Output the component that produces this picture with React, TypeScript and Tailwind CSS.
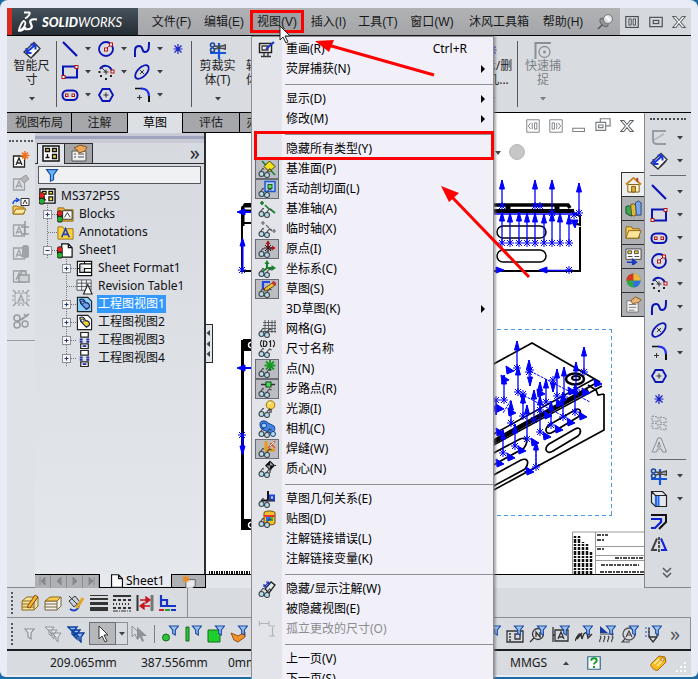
import type { ReactNode } from "react";
import clsx from "clsx";

const BLUE = "#0a14b4";

function Icon({ children, size = 18, className }: { children?: ReactNode; size?: number; className?: string }) {
  return (
    <svg
      width={size}
      height={size}
      viewBox="0 0 18 18"
      fill="none"
      className={clsx("block shrink-0", className)}
      aria-hidden="true"
    >
      {children}
    </svg>
  );
}

function Caret({ className }: { className?: string }) {
  return (
    <svg width="6" height="4" viewBox="0 0 6 4" className={clsx("block shrink-0 text-[#3c4044]", className)}>
      <path d="M0 0h6L3 3.5z" fill="currentColor" />
    </svg>
  );
}

/* ---------- sketch icons, shared by the ribbon and the right toolbar ---------- */

const sketch: Record<string, ReactNode> = {
  dimension: (
    <>
      <path d="M1 11l10-9.500 6 6L8 17z" fill="#f4f7fb" stroke="#333" strokeWidth="1.300" />
      <path d="M10 15l6-6" stroke="#333" strokeWidth="1.500" />
      <path d="M4 11l8-7M3.500 12V7M3.500 12h5M12.500 3.500v5M12.500 3.500h-5" stroke="#1638d8" strokeWidth="2" />
    </>
  ),
  line: <path d="M2 2l14 14" stroke={BLUE} strokeWidth="2.200" />,
  rect: (
    <>
      <rect x="2" y="3.500" width="14" height="11" stroke={BLUE} strokeWidth="2" />
      <rect x="1" y="12.500" width="3" height="3" fill="#fff" stroke="#b01010" />
      <rect x="14" y="2.500" width="3" height="3" fill="#fff" stroke="#b01010" />
    </>
  ),
  slot: (
    <>
      <rect x="1.500" y="4.500" width="15" height="9.500" rx="4.500" stroke={BLUE} strokeWidth="2" />
      <rect x="4.500" y="8" width="2.500" height="2.500" fill="#fff" stroke="#b01010" />
      <rect x="11" y="8" width="2.500" height="2.500" fill="#fff" stroke="#b01010" />
    </>
  ),
  circle: (
    <>
      <circle cx="9" cy="9" r="7" stroke={BLUE} strokeWidth="1.800" />
      <path d="M9 9l5-5" stroke="#b01010" />
      <rect x="7.500" y="8" width="3" height="3" fill="#fff" stroke="#b01010" />
      <rect x="12.500" y="3" width="3" height="3" fill="#fff" stroke="#b01010" />
    </>
  ),
  arc: (
    <>
      <path d="M3 6c3-5 10-4 12 2" stroke={BLUE} strokeWidth="2" />
      <path d="M4 4l5 5M9 6.500v5M6.500 9h5" stroke="#333" />
      <rect x="14" y="7" width="3" height="3" fill="#fff" stroke="#b01010" />
      <path d="M1.500 9h2M3 13h2M8 16h2M13 13h2" stroke="#222" strokeWidth="2" />
    </>
  ),
  spline: <path d="M2 17c0-6-1-11 4-11s2 6 6 6 4-4 4-10" stroke={BLUE} strokeWidth="2" />,
  ellipse: (
    <>
      <ellipse cx="9" cy="9" rx="8.500" ry="4.500" transform="rotate(-45 9 9)" stroke={BLUE} strokeWidth="1.800" />
      <path d="M7 7l4 4M11 7l-4 4" stroke="#333" />
    </>
  ),
  fillet: (
    <>
      <path d="M2 2.500h7" stroke="#111" strokeWidth="1.500" />
      <path d="M8 2.500c5 0 8 3 8 8" stroke="#1c2df0" strokeWidth="2" />
      <path d="M16 10v6" stroke="#111" strokeWidth="2" />
      <path d="M6.500 9v5M4 11.500h5" stroke="#333" />
    </>
  ),
  polygon: (
    <>
      <path d="M5.500 3h7l3.500 6-3.500 6h-7L2 9z" stroke={BLUE} strokeWidth="1.800" />
      <path d="M9 6.500v5M6.500 9h5" stroke="#333" />
    </>
  ),
  point: <path d="M9 4v10M4.500 9h9M5.500 5.500l7 7M12.500 5.500l-7 7" stroke="#1a22c8" strokeWidth="1.200" />,
  trim: (
    <>
      <path d="M1 12h16M10 2v16" stroke="#1556d8" strokeWidth="2.200" />
      <circle cx="3.500" cy="4" r="2" stroke="#1c46a0" strokeWidth="1.600" />
      <circle cx="3.500" cy="9" r="2" stroke="#1c46a0" strokeWidth="1.600" />
      <path d="M5.500 8l11-4.500v3.500zM5.500 5l11 3.500V5z" fill="#777" stroke="#444" />
    </>
  ),
  convert: (
    <>
      <path d="M1.500 1.500h11l4 4v11h-11l-4-4zM1.500 1.500l4 4v11M5.500 5.500h11" fill="#e4e8ec" stroke="#222" strokeWidth="1.200" />
      <path d="M6 6v10M8.500 6v10" stroke="#1c66f0" strokeWidth="2" />
    </>
  ),
  offset: (
    <>
      <path d="M1 2h15v7l-7 7" stroke="#111" strokeWidth="2" />
      <path d="M1 6h10v3l-6 6H1" stroke="#0c22cc" strokeWidth="2.200" />
    </>
  ),
  mirror: (
    <>
      <path d="M7 2.500L2 14h5" stroke="#444" strokeWidth="2" />
      <path d="M11 2.500L16 14h-5" stroke="#1022dd" strokeWidth="2" />
      <path d="M9 1v16" stroke="#222" strokeWidth="1.500" strokeDasharray="3 1" />
    </>
  ),
  pattern: (
    <path
      d="M2 3l6 1v5L2 8zM10 4l6 1v5l-6-1zM2 10l6 1v5l-6-1zM10 11l6 1v5l-6-1z"
      stroke="#8d9095"
      strokeDasharray="2 1"
    />
  ),
  text: <path d="M1.500 16h5l1-3h4l1 3h4L11 2H8L2.500 15M7.500 11h3L9 6z" stroke="#8b8e92" />,
  grayArc: (
    <>
      <path d="M16 2H3v9c0 3 2 4 4 4h9" stroke="#989b9f" strokeWidth="2" />
      <path d="M4 11l10-6" stroke="#b4b6b9" strokeWidth="1.500" />
    </>
  ),
  snap: (
    <>
      <path d="M1.500 18V2H17" stroke="#8c8f93" strokeWidth="2" />
      <circle cx="10.500" cy="11" r="5.500" stroke="#8c8f93" strokeWidth="1.300" />
      <path d="M9 11h3M10.500 9.500v3" stroke="#8c8f93" strokeWidth="1.500" />
    </>
  ),
};

/* ---------- menu bar ---------- */

const menus = [
  { name: "文件(F)", width: "w-[53px]" },
  { name: "编辑(E)", width: "w-[52px]" },
  { name: "视图(V)", width: "w-[54px]", open: true },
  { name: "插入(I)", width: "w-[49px]" },
  { name: "工具(T)", width: "w-[50px]" },
  { name: "窗口(W)", width: "w-[58px]" },
  { name: "沐风工具箱", width: "w-[76px]" },
  { name: "帮助(H)", width: "w-[52px]" },
];

function Logo() {
  return (
    <div className="flex h-full w-[131px] shrink-0 items-center gap-1 border-l-5 border-[#d92a20] bg-gradient-to-b from-[#47525c] to-[#252d34] pl-[5px]">
      <svg width="21" height="22" viewBox="0 0 21 22" fill="none" aria-hidden="true">
        <path d="M7 1.500h5c2 0 0 4-4 6M1 20c7-2 9-9 6-10-2 0-5 8-5 9 0 2 5 0 7-3" stroke="#fff" strokeWidth="1.800" />
        <path d="M20 8.500c-6-1-8 1-6 4.500s0 6-6 5" stroke="#fff" strokeWidth="2.200" />
      </svg>
      <span className="whitespace-nowrap font-['Lato','Noto_Sans',sans-serif] text-[13px] italic leading-5 text-white">
        <b className="font-black">SOLID</b>WORKS
      </span>
    </div>
  );
}

function MenuBar() {
  return (
    <header className="flex h-7 shrink-0 border-b border-black bg-gradient-to-b from-[#b1b2b4] to-[#a5a6a9]">
      <Logo />
      <nav className="flex pl-[7px] font-['Liberation_Sans','Noto_Sans_CJK_SC',sans-serif] text-xs">
        {menus.map((menu) => (
          <div key={menu.name} className={clsx("relative shrink-0", menu.width)}>
            <button
              className={clsx(
                "mt-[2px] h-[23px] w-full whitespace-nowrap leading-4 text-[#18191b]",
                menu.open && "border-3 border-[#ff0000] bg-[#a0a1a4]",
              )}
            >
              {menu.name}
            </button>
            {menu.open && <ViewMenu />}
          </div>
        ))}
      </nav>
      <button className="ml-2 w-6" aria-label="固定">
        <Icon>
          <path d="M1 16l5-5" stroke="#555" strokeWidth="1.500" />
          <ellipse cx="7" cy="9.500" rx="3" ry="5" transform="rotate(-45 7 9.500)" fill="#8f9398" stroke="#666" />
          <circle cx="11" cy="6" r="4.500" fill="#dfe2e6" stroke="#777" />
          <path d="M9 3.500l4 4" stroke="#fff" strokeWidth="2" />
        </Icon>
      </button>
      <div className="ml-auto flex w-[73px] items-center justify-around bg-[#d5d8dd] text-[#4b4f54]">
        <button aria-label="平铺">
          <Icon size={14}>
            <rect x="1" y="2" width="16" height="14" stroke="currentColor" strokeWidth="1.500" />
            <path d="M5 5h3v8H5zM10.500 5h3v8h-3z" stroke="currentColor" strokeWidth="1.200" />
          </Icon>
        </button>
        <button aria-label="最大化">
          <Icon size={14}>
            <rect x="1" y="3" width="16" height="12" stroke="currentColor" strokeWidth="1.500" />
            <rect x="5.500" y="7" width="7" height="4" stroke="currentColor" strokeWidth="1.500" />
          </Icon>
        </button>
        <CloseButton />
      </div>
    </header>
  );
}

function CloseButton() {
  return (
    <button aria-label="关闭">
      <Icon size={14}>
        <path
          d="M1 2h4l4 5 4-5h4l-6 7 6 7h-4l-4-5-4 5H1l6-7z"
          fill="#fff"
          stroke="#5c6066"
          strokeWidth="1.300"
        />
      </Icon>
    </button>
  );
}

/* ---------- view menu ---------- */

const Glasses = () => (
  <g stroke="#3f4449" strokeWidth="1.100">
    <path d="M2 12l3-3.500 1 .5M8 13l3.500-4 2 1" />
    <circle cx="3.500" cy="14" r="2.500" fill="#b4dbe8" />
    <circle cx="9" cy="15" r="2.500" fill="#b4dbe8" />
  </g>
);

const marks: Record<string, ReactNode> = {
  plane: (
    <>
      <path d="M4 1l13 14" stroke="#157f2c" strokeWidth="1.500" />
      <path d="M6 6.500l5.500-5.500 5.500 5.500-5.500 5.500z" fill="#f6e419" stroke="#3c3a12" />
    </>
  ),
  section: (
    <>
      <rect x="7" y="1.500" width="10" height="10" fill="#b4cdf2" stroke="#1d59d6" strokeWidth="1.500" />
      <rect x="10" y="4.500" width="4" height="4" fill="#6ecf5a" stroke="#15641e" />
    </>
  ),
  axis: <path d="M4 1v4M2 3h4M7 5l4 4M12 9l5 4" stroke="#13802b" strokeWidth="1.700" />,
  tempAxis: <path d="M5 1v4M3 3h4M8 5l3 3M12 9l2 2M16 9v4M14 11h4" stroke="#66696d" strokeWidth="1.200" />,
  origin: (
    <>
      <path d="M10 8V1M10 8h7" stroke="#b3131a" strokeWidth="1.600" />
      <path d="M7.500 4L10 .5 12.500 4zM14 5.500L17.500 8 14 10.500z" fill="#b3131a" />
      <path d="M6 8h8M10 4v8M7 5l6 6M13 5l-6 6" stroke="#3a1010" />
    </>
  ),
  coord: (
    <>
      <path d="M9 8V2M9 8h7M9 8l-5 4" stroke="#16832c" strokeWidth="2" />
      <path d="M6.500 4L9 0l2.500 4zM13.500 5L18 8l-4.500 3z" fill="#16832c" />
    </>
  ),
  sketch: (
    <>
      <path d="M12 2H5v7h4" stroke="#2246dd" strokeWidth="2.200" />
      <path d="M7 8l8-5.500 3 2L10 10l-4 1z" fill="#f3c335" stroke="#6d4a11" />
      <path d="M14.500 2l3 2.500" stroke="#c33131" strokeWidth="3" />
    </>
  ),
  grid: <path d="M5 2.500h13M5 5.500h13M5 8.500h13M5 11.500h13M7 0v13M10.500 0v13M14 0v13M17 0v13" stroke="#5d6065" />,
  dimName: (
    <path
      d="M4 0C2 2 2 5 4 7M5.500 1v5.500h1.500C9.500 6 9.500 1 7 1zM11 2l1.500-1v6M15 0c2 2 2 5 0 7"
      stroke="#222"
      strokeWidth="1.200"
    />
  ),
  point: <path d="M12 0v11M6.500 5.500h11M8 1.500l8 8M16 1.500l-8 8" stroke="#189a22" strokeWidth="1.900" />,
  route: (
    <>
      <path d="M3 4.500h14" stroke="#2b2e31" strokeWidth="1.500" />
      <rect x="8" y="2" width="5" height="5" fill="#4edc5c" stroke="#0b4914" />
    </>
  ),
  light: (
    <>
      <circle cx="12.500" cy="5" r="4.300" fill="#fbd64c" stroke="#9a7112" />
      <path d="M11 3.500l2-1" stroke="#fff" strokeWidth="1.500" />
      <path d="M11 10h3M11 12h3" stroke="#54575b" strokeWidth="1.500" />
    </>
  ),
  camera: (
    <>
      <path d="M2 4c0-4 6-4 8-1l6 3c2 3 0 7-3 7l-8-3c-2-1-3-3-3-6z" fill="#3e86e8" stroke="#123f93" />
      <circle cx="6" cy="5.500" r="2.500" fill="#9ccbf9" stroke="#123f93" />
      <circle cx="15" cy="14" r="2.500" fill="#b6dcf3" stroke="#1b3f74" />
    </>
  ),
  weld: (
    <>
      <path d="M8 1v9h9" stroke="#e89b14" strokeWidth="3" />
      <path d="M10 8l7-7M12 3l5 5" stroke="#e2541a" strokeWidth="1.600" />
      <path d="M12 6l4-4" stroke="#fff" />
    </>
  ),
  mass: (
    <>
      <path d="M7 5.500L12 .5l5 5-5 5z" fill="#111" />
      <path d="M12 5.500V2l3.500 3.500zM12 5.500V9L8.500 5.500z" fill="#9ba4ad" />
      <path d="M12 10v3M17 5.500h1" stroke="#111" />
    </>
  ),
  relation: (
    <>
      <path d="M10 1v9M3 10.500h14" stroke="#14161a" strokeWidth="2" />
      <rect x="12" y="5.500" width="4" height="4" stroke="#1e45e0" strokeWidth="2" />
    </>
  ),
  decal: (
    <>
      <path d="M6 2.500c2-2 9-2 11 0v11c-2 2-9 2-11 0z" fill="#f5c02e" stroke="#6b4b0c" />
      <path d="M6 6h11" stroke="#e8362a" strokeWidth="2" />
      <rect x="8" y="7" width="4" height="4" fill="#2b6ff0" />
      <rect x="12" y="7" width="3" height="4" fill="#35b64a" />
    </>
  ),
  annot: (
    <>
      <path d="M7 9l6-7 4 3-6 8z" fill="#e6e8ec" stroke="#222" strokeWidth="1.300" />
      <path d="M6 7l5-5M6 7V4M6 7h3M11 2v3M11 2H8" stroke="#1a34c8" strokeWidth="1.200" />
    </>
  ),
};

type Row = { label: string; mark?: string; on?: boolean; sub?: boolean; keys?: string; off?: boolean; kind?: string };

const viewRows: (Row | null)[] = [
  { label: "重画(R)", kind: "redraw", keys: "Ctrl+R" },
  { label: "荧屏捕获(N)", sub: true },
  null,
  { label: "显示(D)", sub: true },
  { label: "修改(M)", sub: true },
  null,
  { label: "隐藏所有类型(Y)" },
  { label: "基准面(P)", mark: "plane", on: true },
  { label: "活动剖切面(L)", mark: "section", on: true },
  { label: "基准轴(A)", mark: "axis" },
  { label: "临时轴(X)", mark: "tempAxis" },
  { label: "原点(I)", mark: "origin", on: true },
  { label: "坐标系(C)", mark: "coord" },
  { label: "草图(S)", mark: "sketch", on: true },
  { label: "3D草图(K)", sub: true },
  { label: "网格(G)", mark: "grid" },
  { label: "尺寸名称", mark: "dimName" },
  { label: "点(N)", mark: "point", on: true },
  { label: "步路点(R)", mark: "route", on: true },
  { label: "光源(I)", mark: "light" },
  { label: "相机(C)", mark: "camera" },
  { label: "焊缝(W)", mark: "weld", on: true },
  { label: "质心(N)", mark: "mass" },
  null,
  { label: "草图几何关系(E)", mark: "relation" },
  { label: "贴图(D)", mark: "decal" },
  { label: "注解链接错误(L)" },
  { label: "注解链接变量(K)" },
  null,
  { label: "隐藏/显示注解(W)", mark: "annot" },
  { label: "被隐藏视图(E)" },
  { label: "孤立更改的尺寸(O)", kind: "isolate", off: true },
  null,
  { label: "上一页(V)" },
  { label: "下一页(S)" },
];

function MenuIcon({ row }: { row: Row }) {
  if (row.kind === "redraw") {
    return (
      <Icon>
        <rect x="1.500" y="3.500" width="12" height="9" fill="#fff" stroke="#222" strokeWidth="1.500" />
        <path d="M4 6h6v4H4zM6 13v3M10 13v3M3 16.500h10" stroke="#333" strokeWidth="1.300" />
        <path d="M8 9l8-7" stroke="#1c35cc" strokeWidth="2" />
      </Icon>
    );
  }
  if (row.kind === "isolate") {
    return (
      <Icon>
        <path d="M1.500 1v5M11 1v5M2 3.500h9M11 6h6M11 16h6M14.500 7v9" stroke="#b1b3b8" strokeWidth="1.200" />
      </Icon>
    );
  }
  if (!row.mark) return null;
  return (
    <Icon>
      {marks[row.mark]}
      <Glasses />
    </Icon>
  );
}

function ViewMenu() {
  return (
    <ul className="absolute left-px top-7 z-20 w-[243px] border border-[#8c8e94] bg-gradient-to-r from-[#e3e4e9] from-[30px] to-[#f1f0f8] to-[30px] pt-[2px] font-['Noto_Sans','Noto_Sans_CJK_SC',sans-serif] text-xs shadow-[2px_0_2px_#77777799]">
      {viewRows.map((row, i) =>
        row === null ? (
          <li key={i} className="h-[10px] pl-[33px] pt-[5px]">
            <div className="border-t border-[#8f9196]" />
          </li>
        ) : (
          <li key={i}>
            <button
              disabled={row.off}
              className={clsx(
                "flex h-5 w-full items-center pl-[3px] leading-5",
                row.off ? "text-[#8c8c90]" : "text-black",
              )}
            >
              <span
                className={clsx(
                  "flex h-5 w-6 items-center justify-center",
                  row.on && "border border-[#696c72] bg-[#bbbdc2]",
                )}
              >
                <MenuIcon row={row} />
              </span>
              <span className="whitespace-nowrap pl-[7px]">{row.label}</span>
              {row.keys && <span className="ml-auto pr-[26px]">{row.keys}</span>}
              {row.sub && (
                <svg width="4" height="8" viewBox="0 0 4 8" className="ml-auto mr-2">
                  <path d="M0 0l4 4-4 4z" />
                </svg>
              )}
            </button>
          </li>
        ),
      )}
    </ul>
  );
}

/* ---------- ribbon ---------- */

function BigTool({ icon, lines, className, off }: { icon: string; lines: string[]; className?: string; off?: boolean }) {
  return (
    <button
      className={clsx(
        "flex h-full shrink-0 flex-col items-center pt-[5px] leading-[14px]",
        off ? "text-[#7e8185]" : "text-[#1f2124]",
        className,
      )}
    >
      <Icon>{sketch[icon]}</Icon>
      {lines.map((line) => (
        <span key={line} className="whitespace-nowrap">
          {line}
        </span>
      ))}
      <Caret className={clsx("mt-[10px]", off && "opacity-60")} />
    </button>
  );
}

const toolGrid = [
  ["line", "circle", "spline", "point"],
  ["rect", "arc", "ellipse"],
  ["slot", "polygon", "fillet"],
];

const Divider = () => <div className="h-[66px] w-px shrink-0 self-center bg-[#55585c]" />;

function Ribbon() {
  return (
    <section className="flex h-[76px] shrink-0 overflow-hidden bg-[#d8dbe0] text-xs">
      <BigTool icon="dimension" lines={["智能尺", "寸"]} className="w-[49px]" />
      <Divider />
      <div className="flex w-[134px] shrink-0 flex-col pl-1 pt-px">
        {toolGrid.map((tools, r) => (
          <div key={r} className="flex h-[23px] items-center">
            {tools.map((tool) => (
              <button key={tool} className="flex w-9 shrink-0 items-center gap-[6px]" aria-label={tool}>
                <Icon>{sketch[tool]}</Icon>
                {tool !== "point" && tool !== "polygon" && <Caret />}
              </button>
            ))}
          </div>
        ))}
      </div>
      <Divider />
      <BigTool icon="trim" lines={["剪裁实", "体(T)"]} className="w-[51px]" />
      <BigTool icon="convert" lines={["转换实", "体引用"]} className="w-[42px]" />
      <div className="flex w-[186px] shrink-0 items-start justify-around pt-[6px]">
        <button aria-label="等距实体">
          <Icon>{sketch.offset}</Icon>
        </button>
        <button aria-label="镜向实体">
          <Icon>{sketch.mirror}</Icon>
        </button>
      </div>
      <BigTool icon="point" lines={["显示/删", "除几..."]} className="w-[46px] pr-1" />
      <Divider />
      <BigTool icon="snap" lines={["快速捕", "捉"]} className="w-[50px]" off />
    </section>
  );
}

/* ---------- tabs and document window buttons ---------- */

const tabs = [
  { name: "视图布局", width: "w-[65px]" },
  { name: "注解", width: "w-14" },
  { name: "草图", width: "w-[55px]", active: true },
  { name: "评估", width: "w-[57px]" },
  { name: "办公室产品", width: "w-[74px]" },
];

function TabStrip() {
  return (
    <div className="flex h-5 shrink-0 bg-white text-xs">
      {tabs.map((tab) => (
        <button
          key={tab.name}
          className={clsx(
            "shrink-0 border-r border-black leading-4",
            tab.width,
            tab.active ? "bg-[#dcdfe4] text-black" : "border-b bg-[#a5a7ab] text-[#1d1e20]",
          )}
        >
          {tab.name}
        </button>
      ))}
      <div className="ml-auto flex w-[118px] items-end justify-between pr-[10px] text-[#7b7e83]">
        <button aria-label="左窗格">
          <Icon size={14}>
            <path d="M1 1h16v16H1zM6 5L3 9l3 4M8 5v8M11 5h3v8h-3z" stroke="currentColor" strokeWidth="1.200" />
          </Icon>
        </button>
        <button aria-label="右窗格">
          <Icon size={14}>
            <path d="M1 1h16v16H1zM12 5l3 4-3 4M10 5v8M4 5h3v8H4z" stroke="currentColor" strokeWidth="1.200" />
          </Icon>
        </button>
        <button aria-label="最小化">
          <Icon size={14}>
            <path d="M1 12h15v4H1z" stroke="currentColor" strokeWidth="1.300" />
          </Icon>
        </button>
        <button aria-label="还原">
          <Icon size={16}>
            <path d="M6 6V2h11v8h-5M1 6h11v9H1zM4 9h5v3H4z" stroke="currentColor" strokeWidth="1.300" />
          </Icon>
        </button>
        <CloseButton />
      </div>
    </div>
  );
}

/* ---------- left annotation toolbar ---------- */

const Note = ({ color = "#222" }: { color?: string }) => (
  <path d="M1.500 5h11v11h-11zM4 14l3-7 3 7M5 12h4" stroke={color} strokeWidth="1.300" fill="none" />
);

const leftTools: ReactNode[] = [
  <>
    <rect x="1" y="5" width="12" height="11" fill="#fff" />
    <Note />
    <path d="M13 0v9M8.500 4.500h9M10 1.500l6 6M16 1.500l-6 6" stroke="#f0701c" strokeWidth="1.500" />
  </>,
  <>
    <Note color="#a0a3a7" />
    <path d="M8 5l6-4 3 4-5 4z" fill="#b4b6ba" stroke="#999" />
  </>,
  <>
    <path d="M9 1.500h8v7H9z" fill="#fff" stroke="#333" />
    <path d="M11 7l2-4 2 4" stroke="#333" />
    <path d="M1 7c0-3 2-4 5-4M4 1l3 2-3 2" stroke="#1c4ed8" strokeWidth="1.500" />
    <path d="M1 9h4l1 1h6v7H1z" fill="#f7cb55" stroke="#9a6f12" />
    <path d="M1 17l3-5h10l-3 5z" fill="#fde59a" stroke="#9a6f12" />
  </>,
  <>
    <Note color="#a0a3a7" />
    <path d="M13 1v13M9 7h8M9 14h8" stroke="#989ba0" strokeWidth="1.500" />
  </>,
  <>
    <Note color="#a0a3a7" />
    <rect x="10" y="2" width="7" height="13" rx="2.500" fill="#a0a3a7" />
  </>,
  <>
    <Note color="#a0a3a7" />
    <path d="M7 9h10v7H7zM9 9V5h5v4" stroke="#989ba0" strokeWidth="1.500" fill="#cfd1d5" />
  </>,
  <>
    <path d="M3 4h12v10H3z" stroke="#a0a3a7" />
    <path
      d="M6 13l3-7 3 7M7 11h4M1 1l3 3M17 1l-3 3M1 17l3-3M17 17l-3-3M7 1v2M11 1v2M7 15v2M11 15v2M0 7h2M0 11h2M16 7h2M16 11h2"
      stroke="#989ba0"
      strokeWidth="1.200"
    />
  </>,
  <>
    <circle cx="5" cy="6" r="3" stroke="#989ba0" strokeWidth="1.500" />
    <circle cx="5" cy="13" r="3" stroke="#989ba0" strokeWidth="1.500" />
    <circle cx="13" cy="12" r="3" stroke="#989ba0" strokeWidth="1.500" />
    <path d="M7 9l10-7M5 10l7-4M12 2l3 3" stroke="#989ba0" strokeWidth="1.700" />
  </>,
];

function LeftToolbar() {
  return (
    <aside className="flex w-7 shrink-0 flex-col border-b border-[#85888d] bg-[#dfe2e7]">
      <div className="flex flex-col items-center border-b border-[#9b9ea3] pb-2">
        <div className="mb-[6px] mt-[7px] w-6 border-t-2 border-dotted border-[#55585d]" />
        {leftTools.map((art, i) => (
          <button key={i} className="flex h-[23px] items-center" aria-label={`注解 ${i + 1}`}>
            <Icon>{art}</Icon>
          </button>
        ))}
      </div>
    </aside>
  );
}

/* ---------- feature tree ---------- */

const TrafficLight = () => (
  <>
    <rect x="0" y="4.500" width="6" height="13" rx="3" fill="#222" />
    <circle cx="3" cy="8" r="2.600" fill="#e0201a" />
    <circle cx="3" cy="14" r="2.600" fill="#22b02c" />
  </>
);

const DrawingGlyph = () => (
  <>
    <path d="M1 1h16v15H1z" fill="#fff" stroke="#111" strokeWidth="1.500" />
    <path
      d="M3.500 3.500h4v3h-4zM10.500 3.500h4v3h-4zM3.500 12.500h4M5.500 9v3M10.500 9.500h4v4h-4z"
      fill="#f4d83c"
      stroke="#111"
      strokeWidth="1.300"
    />
  </>
);

const PartView = ({ part, sheet }: { part: string; sheet: string }) => (
  <>
    <path d="M1.500 1.500h11l4 4v11h-15z" fill={sheet} stroke="#222" strokeWidth="1.200" />
    <path d="M4 4c3-2 5 0 6 3 3 0 5 2 4 5l-3 2-6-6z" fill={part} stroke="#102060" strokeWidth="1.200" />
    <circle cx="7" cy="7" r="1.500" fill={sheet} stroke="#102060" />
  </>
);

const StandardView = () => (
  <>
    <path d="M5 .5h8v5H5zM5 12.500h8v5H5z" fill="#fff" stroke="#222" strokeWidth="1.300" />
    <path d="M4 8h3M11 8h3M4 10.500h3M11 10.500h3M7 15h4" stroke="#1f2c9c" strokeWidth="2" />
  </>
);

const treeIcons: Record<string, ReactNode> = {
  drawing: (
    <>
      <DrawingGlyph />
      <TrafficLight />
    </>
  ),
  blocks: (
    <>
      <path d="M1 2h6l1 2h9v12H1z" fill="#f4b63a" stroke="#8d6310" />
      <path d="M6 5h10v9H6zM8 12l3-5 3 5" fill="#fff" stroke="#333" />
      <TrafficLight />
    </>
  ),
  annotations: (
    <>
      <path d="M1 3h5l1 2h10v11H1z" fill="#fbd23c" stroke="#9b7415" />
      <path d="M5 14l4-9 4 9M6.500 11h5" stroke="#1b3fc0" strokeWidth="1.700" />
    </>
  ),
  sheet: (
    <>
      <path d="M5 2h7l4 4v10H5zM12 2v4h4" fill="#fff" stroke="#111" strokeWidth="1.300" />
      <TrafficLight />
    </>
  ),
  format: (
    <path
      d="M1.500 1.500h15v15h-15zM4 4h12M4 4v9h12M9 13V9h7M1.500 9H4M9 1.500V4"
      fill="#fff"
      stroke="#111"
      strokeWidth="1.300"
    />
  ),
  revision: (
    <>
      <path d="M1 2h15v11H1zM1 5.500h15M1 9h15M6 2v11M11 2v11" fill="#f4f6f8" stroke="#55585d" />
      <path d="M8 17l4.500-10L17 17z" fill="#fff" stroke="#222" strokeWidth="1.200" />
    </>
  ),
  partBlue: <PartView part="#6fa4ec" sheet="#8cd0ff" />,
  partYellow: <PartView part="#f2d12c" sheet="#fff" />,
  standard: <StandardView />,
};

const tree = [
  { label: "MS372P5S", icon: "drawing", level: 0 },
  { label: "Blocks", icon: "blocks", level: 1, box: "+" },
  { label: "Annotations", icon: "annotations", level: 1 },
  { label: "Sheet1", icon: "sheet", level: 1, box: "-" },
  { label: "Sheet Format1", icon: "format", level: 2, box: "+" },
  { label: "Revision Table1", icon: "revision", level: 2 },
  { label: "工程图视图1", icon: "partBlue", level: 2, box: "+", selected: true },
  { label: "工程图视图2", icon: "partYellow", level: 2, box: "+" },
  { label: "工程图视图3", icon: "standard", level: 2, box: "+" },
  { label: "工程图视图4", icon: "standard", level: 2, box: "+" },
];

const indents = ["pl-1", "pl-2", "pl-[27px]"];

function Expander({ box }: { box?: string }) {
  return (
    <svg width="14" height="18" viewBox="0 0 14 18" fill="none" className="shrink-0">
      <path d="M4.500 0v18M5 9.500h9" stroke="#777" strokeDasharray="1 1" />
      {box && <rect x=".5" y="5.500" width="8" height="8" fill="#f4f6f8" stroke="#8d9096" />}
      {box && <path d="M2.500 9.500h4" stroke="#2a3570" />}
      {box === "+" && <path d="M4.500 7.500v4" stroke="#2a3570" />}
    </svg>
  );
}

function FeaturePanel() {
  return (
    <section className="flex w-[171px] shrink-0 flex-col border-r-2 border-[#2b2d31] bg-gradient-to-b from-[#d6d9df] to-[#e4e7eb]">
      <div className="h-[10px] shrink-0 border-b-4 border-t-3 border-[#c8cbd5] bg-[#a0a4bc]" />
      <div className="flex h-[21px] shrink-0 border-b border-[#2b2d31]">
        <button
          className="-mb-px ml-[2px] flex w-7 justify-center border border-b-0 border-[#2b2d31] bg-[#e2e5ea] pt-px"
          aria-label="特征树"
        >
          <Icon>
            <DrawingGlyph />
          </Icon>
        </button>
        <button className="flex w-7 justify-center border-r border-t border-[#2b2d31] bg-[#a3a5a9]" aria-label="属性">
          <Icon>
            <path d="M2 7h14v10H2zM4 10h2M8 10h6M4 13h2M8 13h6" fill="#eee" stroke="#555" />
            <path d="M4 4l6-3 7 2-2 4-6 2-2-3z" fill="#e9a75c" stroke="#8c541a" />
          </Icon>
        </button>
        <button className="ml-auto pr-1 text-xl leading-4 text-[#26282c]">»</button>
      </div>
      <label className="mx-[3px] mt-[2px] flex h-[18px] shrink-0 items-center border border-[#55585d] bg-[#f0f1f3]">
        <Icon size={14} className="ml-1.5">
          <path d="M2 2h14l-5 7v6l-4 2V9z" fill="#6db2f4" stroke="#1b4ea0" strokeWidth="1.500" />
        </Icon>
        <input className="h-4 w-full min-w-0 bg-transparent text-xs outline-none" aria-label="过滤器" />
      </label>
      <ul className="pt-[3px] text-xs leading-[18px] text-[#101114]">
        {tree.map((node) => (
          <li key={node.label} className={clsx("flex h-[18px] items-center", indents[node.level])}>
            {node.level > 0 && <Expander box={node.box} />}
            <Icon size={17}>{treeIcons[node.icon]}</Icon>
            <span className={clsx("ml-1 whitespace-nowrap px-px", node.selected && "bg-[#3399ff] text-white")}>
              {node.label}
            </span>
          </li>
        ))}
      </ul>
    </section>
  );
}

/* ---------- drawing area ---------- */

// vertical dimension arrows: x, y of the star, y of the tip
const flatArrows = [
  [502, 206, 180],
  [535, 206, 180],
  [552, 213, 180],
  [579, 213, 183],
  [502, 243, 212],
  [510, 243, 213],
  [519, 243, 212],
  [527, 243, 213],
  [535, 243, 213],
  [544, 243, 214],
  [552, 243, 212],
  [560, 243, 213],
  [569, 243, 215],
];

const isoArrows = [
  [517, 368, 341],
  [518, 392, 366],
  [529, 372, 360],
  [530, 370, 386],
  [584, 372, 347],
  [557, 396, 369],
  [564, 397, 367],
  [576, 390, 362],
  [504, 400, 375],
  [523, 394, 404],
  [511, 423, 401],
  [523, 416, 394],
  [534, 420, 390],
  [540, 410, 382],
  [546, 402, 379],
  [553, 380, 392],
  [527, 439, 405],
  [540, 432, 396],
  [551, 425, 401],
  [563, 417, 392],
  [575, 412, 385],
  [503, 453, 430],
  [515, 446, 424],
  [536, 467, 441],
  [496, 400, 415],
];

const isoHeads = [
  [510, 370],
  [505, 379],
  [541, 393],
  [572, 391],
  [586, 392],
  [598, 383],
  [583, 416],
  [571, 422],
  [559, 429],
  [547, 436],
  [522, 450],
  [511, 457],
  [500, 463],
  [530, 471],
  [535, 442],
  [500, 432],
  [548, 415],
  [512, 412],
  [560, 403],
  [500, 408],
];

function Star({ x, y }: { x: number; y: number }) {
  return <path d={`M${x - 4} ${y}h8M${x} ${y - 4}v8M${x - 3} ${y - 3}l6 6M${x + 3} ${y - 3}l-6 6`} />;
}

function Arrow({ x, y, tip }: { x: number; y: number; tip: number }) {
  const back = tip < y ? 9 : -9;
  return (
    <g stroke="#0000ff">
      <path d={`M${x} ${y}V${tip}`} strokeWidth="1.300" />
      <path d={`M${x - 2.5} ${tip + back}h5L${x} ${tip}z`} fill="#0000ff" />
      <Star x={x} y={y} />
    </g>
  );
}

function Drawing() {
  return (
    <svg className="absolute inset-0 h-full w-full" fill="none" aria-hidden="true">
      <g transform="translate(-206 -133)">
        <g stroke="#000" strokeWidth="2">
          <path d="M253 204h-8l-3 4v63h11M242 223h11" />
          <path d="M243 206h10M243 211h10M243 206v20" strokeWidth="3" />
          <path d="M242.500 340v190" strokeWidth="3" />
          <path d="M253 340h-9v10h9zM253 520h-9v9h9z" fill="#000" strokeWidth="2" />
          <path d="M253 342c-6 0-6 6 0 6M253 522c-6 0-6 6 0 6" stroke="#fff" strokeWidth="1.500" />
        </g>
        <g stroke="#0000ff" strokeWidth="2">
          <path d="M242.500 270v-30M238 212h15M238 368h15M242.500 435v15" />
          <path
            d="M237 212l8-3v6zM237 368l8-3v6zM240 246l2.500-8 2.500 8zM240 446l2.500 9 2.500-9z"
            fill="#0000ff"
            strokeWidth="1"
          />
          <g strokeWidth="1">
            <Star x={242} y={270} />
            <Star x={242} y={435} />
          </g>
        </g>
        <circle cx="517" cy="152" r="7.500" fill="#c6c6c6" stroke="#b8b8b8" />
        <path d="M495 151h6l-3 4z" fill="#444" />

        <g stroke="#000">
          <path d="M490 205h78l2 3" strokeWidth="3.500" />
          <path d="M490 211h84" strokeWidth="4" />
          <path d="M508 206v4M557 206v4" strokeWidth="5" />
          <path d="M574 213l6 3v9l-5-2M580 227v44h-90" strokeWidth="2" />
          <rect x="497" y="226" width="49" height="12" rx="6" strokeWidth="1.500" />
          <rect x="497" y="250" width="49" height="12" rx="6" strokeWidth="1.500" />
        </g>
        <g stroke="#0000ff">
          <path d="M490 214h86M540 270.500h30" strokeWidth="1.500" />
          <path d="M539 270l8-3v6zM496 267l8 3-8 3zM571 220h7l-3 8z" fill="#0000ff" />
          <Star x={569} y={270} />
          <Star x={574} y={215} />
          <Star x={540} y={206} />
        </g>
        {flatArrows.map(([x, y, tip]) => (
          <Arrow key={`${x}-${y}`} x={x} y={y} tip={tip} />
        ))}

        <path d="M490 329.500h122M490 515.500h122" stroke="#4b9be8" strokeDasharray="4 3" />
        <path d="M611.500 329v187" stroke="#4b9be8" strokeDasharray="4 3" />

        <g stroke="#000" strokeWidth="1.700">
          <path d="M490 366l42-23 68 39M604 394v36L490 492" />
          <path d="M490 442l108-60" strokeWidth="2" />
          <path d="M490 436l104-57M490 447l112-61" strokeWidth="1.500" />
          <path d="M490 444l98-54" strokeWidth="4" />
          <path d="M588 385l8 5 2 5 6-1" />
          <ellipse cx="575" cy="379" rx="9" ry="5.500" strokeWidth="2.500" />
          <ellipse cx="576" cy="378" rx="4" ry="2" strokeWidth="2" />
          <path d="M549 425l26-15c6-3 7 3 3 7l-25 15c-6 4-10-2-4-7z" />
          <path d="M549 444l26-15c6-3 7 3 3 7l-25 15c-6 4-10-2-4-7z" />
          <path d="M490 455l30-16c8-3 8 4 4 9l-34 19M490 477l31-17c8-3 8 4 4 9l-35 19" />
        </g>
        <g stroke="#0000ff">
          <path d="M530 371l60 31M517 392l50 26M511 400l-8 13M536 442v26l-12 4" strokeDasharray="3 1" />
          {isoHeads.map(([x, y]) => (
            <path key={`${x}-${y}`} d={`M${x - 4} ${y - 4}l8 5-7 3z`} fill="#0000ff" />
          ))}
        </g>
        {isoArrows.map(([x, y, tip]) => (
          <Arrow key={`${x}-${y}`} x={x} y={y} tip={tip} />
        ))}

        <g stroke="#999">
          <path d="M572.500 574v-42H645M595.500 532v42M596 546.500h49M596 555.500h49M596 560.500h49" />
        </g>
        <path
          d="M575 574v-38M579 574v-38M583 574v-32M587 574v-30M591 574v-22"
          stroke="#111"
          strokeWidth="2.500"
          strokeDasharray="3 1 2 1 4 1"
        />
        <path
          d="M597 535h11M597 540h7M597 549h7M615 558h30M601 565h38M600 572h45"
          stroke="#111"
          strokeWidth="1.500"
          strokeDasharray="4 1 2 1"
        />
        <path d="M209 572.500h46" stroke="#111" strokeWidth="3" strokeDasharray="1 1 2 1" />
      </g>
    </svg>
  );
}

const taskTabs: ReactNode[] = [
  <>
    <path d="M3 9h12v8H3z" fill="#fff4c8" stroke="#7b5a14" />
    <path d="M1 9l8-7 8 7" stroke="#c8861a" strokeWidth="2" />
    <path d="M7 17v-6h4v6z" fill="#e0a83a" stroke="#7b5a14" />
    <path d="M13 2v4" stroke="#b3342a" strokeWidth="2" />
  </>,
  <>
    <path d="M1 7l3-1 3 2v9l-3-1-3-2z" fill="#39a852" stroke="#174f23" />
    <path d="M6 5l3-1 3 2v10l-3 1-2-1z" fill="#e0b83c" stroke="#6b5212" />
    <path d="M11 3l3-2 3 2v13h-5z" fill="#7aa7e8" stroke="#27477f" />
  </>,
  <>
    <path d="M1 3h6l1 2h7v10H1z" fill="#f7cb55" stroke="#8a6312" />
    <path d="M1 15l3-8h13l-3 8z" fill="#fde59a" stroke="#8a6312" />
  </>,
  <>
    <path d="M1 1h16v11H1z" fill="#fff" stroke="#444" />
    <path d="M3 3h4v3H3zM10 3h4v3h-4zM3 9h5M10 9h5" fill="#f1d33a" stroke="#444" />
    <path d="M2 15h8M8 12l4 3-4 3z" stroke="#1b39c0" strokeWidth="1.500" fill="#1b39c0" />
  </>,
  <>
    <circle cx="9" cy="9" r="7.500" fill="#2ca84a" />
    <path d="M9 9V1.500A7.500 7.500 0 0 0 1.500 9z" fill="#d8342a" />
    <path d="M9 9h7.500A7.500 7.500 0 0 1 9 16.500z" fill="#2f6fe0" />
    <path d="M9 9h7.500A7.500 7.500 0 0 0 9 1.500z" fill="#f0b63c" />
  </>,
  <>
    <path d="M2 5h12v12H2zM4 9h8M4 12h8M4 15h6" fill="#f3f3f3" stroke="#777" />
    <path d="M6 5l5-4 6 3-3 3-6 1z" fill="#e9b47a" stroke="#8c541a" />
  </>,
];

function Canvas() {
  return (
    <main className="relative flex min-w-0 flex-1 items-start overflow-hidden bg-white">
      <Drawing />
      <button
        className="absolute -left-0.5 top-[191px] flex h-[39px] w-[9px] flex-col items-center justify-evenly border border-l-0 border-[#2b2d31] bg-[#e2e5ea]"
        aria-label="折叠"
      >
        <Caret className="rotate-90" />
        <Caret className="rotate-90" />
        <Caret className="rotate-90" />
      </button>
      <div className="relative ml-auto mt-[39px] flex flex-col border-l border-t border-[#333]">
        {taskTabs.map((art, i) => (
          <button
            key={i}
            className={clsx(
              "flex h-6 w-[22px] items-center justify-center border-b border-[#333]",
              i === 0 ? "bg-[#eceef0]" : "bg-[#aeb0b4]",
            )}
            aria-label={`任务窗格 ${i + 1}`}
          >
            <Icon size={17}>{art}</Icon>
          </button>
        ))}
      </div>
    </main>
  );
}

function SheetTabs() {
  return (
    <footer className="flex h-[14px] shrink-0 border-t border-black bg-[#e2e5e9] text-xs leading-3">
      {["M6 1L2 5l4 4zM1 1v8", "M6 1L2 5l4 4z", "M2 1l4 4-4 4z", "M2 1l4 4-4 4zM7 1v8"].map((d) => (
        <button
          key={d}
          className="flex w-4 justify-center border-r border-[#8c8f94] bg-[#aeb0b4] pt-px"
          aria-label="翻页"
        >
          <svg width="8" height="10" viewBox="0 0 8 10">
            <path d={d} fill="#85888d" stroke="#85888d" />
          </svg>
        </button>
      ))}
      <button className="-mt-px flex w-[73px] items-center gap-[2px] border-b border-x border-black bg-[#e6e9ed] pl-[10px]">
        <Icon size={14}>
          <path d="M2 1h9l5 5v11H2zM11 1v5h5" fill="#fff" stroke="#111" strokeWidth="1.500" />
        </Icon>
        Sheet1
      </button>
      <button className="flex w-[34px] justify-center border-b border-r border-black bg-[#aeb0b4]" aria-label="添加图纸">
        <Icon size={14}>
          <path d="M5 6h12v8l-4 3H5z" fill="#e8eaee" stroke="#445" />
          <path d="M5 0v10M0 5h10M1.500 1.500l7 7M8.500 1.500l-7 7" stroke="#f08a1c" strokeWidth="1.500" />
        </Icon>
      </button>
    </footer>
  );
}

/* ---------- right sketch toolbar ---------- */

const rightTools: { icon: string; caret?: boolean }[][] = [
  [
    { icon: "grayArc", caret: true },
    { icon: "dimension", caret: true },
  ],
  [
    { icon: "line", caret: true },
    { icon: "rect", caret: true },
    { icon: "slot", caret: true },
    { icon: "circle", caret: true },
    { icon: "arc", caret: true },
    { icon: "spline", caret: true },
    { icon: "ellipse", caret: true },
    { icon: "fillet", caret: true },
    { icon: "polygon" },
    { icon: "point" },
    { icon: "pattern" },
    { icon: "text" },
  ],
  [{ icon: "trim", caret: true }, { icon: "convert", caret: true }, { icon: "offset" }, { icon: "mirror" }],
];

function RightToolbar() {
  return (
    <aside className="flex w-[47px] shrink-0 flex-col border-b border-l border-[#85888d] bg-[#d8dbe0] px-[5px]">
      <div className="mb-[6px] mt-[5px] border-t-2 border-dotted border-[#45484d]" />
      {rightTools.map((group, g) => (
        <div key={g} className={clsx(g > 0 && "mt-[3px] border-t border-[#66696e] pt-1")}>
          {group.map((tool) => (
            <button key={tool.icon} className="flex h-[23px] w-full items-center gap-[9px]" aria-label={tool.icon}>
              <Icon>{sketch[tool.icon]}</Icon>
              {tool.caret && <Caret />}
            </button>
          ))}
        </div>
      ))}
      <svg width="10" height="12" viewBox="0 0 10 12" fill="none" className="mb-2 ml-3 mt-auto">
        <path d="M1 1l4 4 4-4M1 6l4 4 4-4" stroke="#55585d" strokeWidth="1.500" />
      </svg>
    </aside>
  );
}

/* ---------- bottom toolbars ---------- */

const Handle = () => <div className="ml-[4px] h-[22px] shrink-0 border-l-2 border-dotted border-[#55585d]" />;

const layerTools: ReactNode[] = [
  <>
    <path d="M1 7l5-4h11l-4 4zM1 7v9h12V7M13 16l4-4V3M1 10h12M1 13h12" fill="#f6e39a" stroke="#8a6b20" />
    <path d="M6 13L14 1l3 2-8 11z" fill="#f3b52c" stroke="#8a4b12" />
  </>,
  <>
    <path d="M1 7v9h12V7zM13 16l4-4V3l-4 4M1 10h12M1 13h12" fill="#f2f2ee" stroke="#77643a" />
    <path d="M1 7l5-4h11l-4 4z" fill="#f8c94a" stroke="#8a6b20" />
  </>,
  <>
    <path d="M2 7l6-5 5 6-6 5z" fill="#c8d0dc" stroke="#333" />
    <path d="M3 15c4 3 8 1 9-3" stroke="#1d3fc0" strokeWidth="2" />
    <path d="M10 14l6-10" stroke="#e2a51f" strokeWidth="3" />
    <path d="M2 2l8 8" stroke="#333" />
  </>,
  <>
    <path d="M0 1.500h18" stroke="#333" />
    <path d="M0 5h18" stroke="#333" strokeWidth="2" />
    <path d="M0 9.500h18" stroke="#333" strokeWidth="3" />
    <path d="M0 15h18" stroke="#333" strokeWidth="4" />
  </>,
  <>
    <path d="M0 2h18" stroke="#333" strokeWidth="2" />
    <path d="M0 6h18M0 14h18" stroke="#333" strokeWidth="2" strokeDasharray="3 2" />
    <path d="M0 10h18" stroke="#333" strokeWidth="2" strokeDasharray="1 2" />
    <path d="M0 17h18" stroke="#333" strokeDasharray="5 1 1 1" />
  </>,
  <>
    <path d="M1.500 1v16" stroke="#333" strokeWidth="2" />
    <path d="M16 1v16" stroke="#777" strokeWidth="3" />
    <path d="M4 6h8M10 3l4 3-4 3zM6 12h8M8 9l-4 3 4 3z" fill="#c8141c" stroke="#c8141c" strokeWidth="1.300" />
  </>,
  <>
    <path d="M2 1v11h15M2 6h6v6" stroke="#1733c4" strokeWidth="2.200" />
    <path d="M0 16h5" stroke="#d0202a" strokeWidth="2" />
    <path d="M6 16h5" stroke="#22a030" strokeWidth="2" />
    <path d="M12 16h5" stroke="#1733c4" strokeWidth="2" />
  </>,
];

function LayerToolbar() {
  return (
    <div className="flex h-[30px] shrink-0 items-center border-b border-[#8b8e93] bg-[#d8dbe0]">
      <Handle />
      <div className="ml-2 flex h-full items-center gap-[5px] border-r border-[#8b8e93] pr-[10px]">
        {layerTools.map((art, i) => (
          <button key={i} aria-label={`图层 ${i + 1}`}>
            <Icon>{art}</Icon>
          </button>
        ))}
      </div>
    </div>
  );
}

const Funnel = () => (
  <path d="M8.500 1h9l-3.200 4v5l-2.600-1.500V5z" fill="#9cc8f6" stroke="#1c4aa4" strokeWidth="1.200" />
);

const filterArt: ReactNode[] = [
  <circle cx="5" cy="12.500" r="3.500" fill="#2fc53a" stroke="#136c1b" />,
  <path d="M2 2h3v14H2z" fill="#2fc53a" stroke="#136c1b" />,
  <path d="M1 5h12v12H1z" fill="#1fd02c" stroke="#136c1b" />,
  <path d="M1 8l7 3 7-4v5l-7 5-4-2z" fill="#f0922a" stroke="#9b4f10" />,
  <path d="M2 4l12 12" stroke="#222" />,
  <path d="M1 8h10v8H1z" stroke="#222" />,
  <path d="M1 16L12 4" stroke="#222" />,
  <circle cx="7" cy="11" r="4" stroke="#222" />,
  <path d="M2 5v11h12" stroke="#222" />,
  <path d="M1 9h12v6H1z" stroke="#222" />,
  <circle cx="7" cy="11" r="4" stroke="#222" />,
  <path d="M2 15L8 5l6 10z" stroke="#222" />,
  <path d="M2 5v11h12" stroke="#222" />,
  <path d="M1 9h12v6H1z" stroke="#222" />,
  <path d="M2 15L8 5" stroke="#222" />,
  <path d="M1 6h16v11H1zM3 9h2M3 12h2M3 15h2M9 9h5v5H9z" stroke="#333" strokeWidth="1.300" />,
  <>
    <circle cx="9" cy="9" r="5.500" stroke="#333" strokeWidth="1.300" />
    <path d="M7 12V7l4 5V7M5 13l-4 4" stroke="#333" strokeWidth="1.300" />
  </>,
  <path d="M1 2v15M3 5h13v11H3zM6 14l3-7 3 7M7 12h4M1 10h2" stroke="#333" strokeWidth="1.300" />,
  <path d="M0 16c4-9 6-9 7-2 2-8 5-8 6-1l4-4M2 14l5-6" stroke="#333" strokeWidth="1.500" />,
  <>
    <path d="M2 1l8 7H2z" fill="#1c3aa0" />
    <path
      d="M2 9h14M2 11c3 2-2 4 0 6M6 11c3 2-2 4 0 6M10 11c3 2-2 4 0 6M14 11c3 2-2 4 0 6"
      stroke="#444"
      strokeWidth="1.200"
    />
  </>,
  <>
    <circle cx="8" cy="9" r="6" stroke="#555" strokeWidth="1.300" />
    <path d="M5 12l3-6 3 6M6 10h4M4 14l-3 3h8" stroke="#444" strokeWidth="1.200" />
  </>,
  <>
    <path d="M1 3h5M1 7h5M1 11h5" stroke="#1d4fd0" strokeDasharray="2 1" />
    <path d="M5 3v9l4 5 4-5V8M5 12h8" stroke="#333" strokeWidth="1.300" />
  </>,
];

function SelectionToolbar() {
  return (
    <div className="flex h-[31px] shrink-0 items-center overflow-hidden border-r border-[#8b8e93] bg-[#d8dbe0]">
      <Handle />
      <div className="ml-2 flex items-center gap-[5px]">
        <button aria-label="过滤器">
          <Icon>
            <path d="M4 4h9l-3 4v6l-3-2V8z" fill="#e4e6ea" stroke="#8f9297" strokeWidth="1.200" />
          </Icon>
        </button>
        <button aria-label="清除过滤器">
          <Icon>
            <path
              d="M1 2h9L7 6v5L5 9V6zM4 5h9l-3 4v5l-2-2V9zM8 8h9l-3 4v5l-2-2v-3z"
              fill="#e4e6ea"
              stroke="#8f9297"
            />
          </Icon>
        </button>
        <button aria-label="所有过滤器">
          <Icon>
            <path
              d="M1 2h9L7 6v5L5 9V6zM4 5h9l-3 4v5l-2-2V9zM8 8h9l-3 4v5l-2-2v-3z"
              fill="#8fc3fa"
              stroke="#0f3f9c"
              strokeWidth="1.400"
            />
          </Icon>
        </button>
      </div>
      <button
        className="ml-1 flex h-[23px] w-[27px] items-center justify-center border border-[#6c6f74] bg-[#b6b8bc]"
        aria-label="选择"
      >
        <Icon>
          <path d="M5 1v13l3-3 3 6 2-1-3-6h4z" fill="#fff" stroke="#333" />
        </Icon>
      </button>
      <button
        className="flex h-[23px] w-3 items-center justify-center border border-l-0 border-[#8b8e93]"
        aria-label="选择选项"
      >
        <Caret />
      </button>
      <button className="ml-[2px]" aria-label="放大选择">
        <Icon>
          <path d="M2 1v11l3-3 2 5 2-1-2-4h3z" fill="#d8dbe0" stroke="#909397" />
          <path d="M7 2v13l3-3 2 5 2-1-2-5h5z" fill="#8f9296" />
        </Icon>
      </button>
      <div className="mx-[6px] h-[18px] w-px shrink-0 bg-[#7b7e83]" />
      <div className="flex items-center gap-[5px]">
        {filterArt.map((art, i) => (
          <button key={i} aria-label={`选择过滤 ${i + 1}`}>
            <Icon>
              {art}
              <Funnel />
            </Icon>
          </button>
        ))}
      </div>
      <button className="ml-2 text-xl leading-5 text-[#55585d]">»</button>
    </div>
  );
}

function StatusBar() {
  return (
    <div className="flex h-[26px] shrink-0 items-center border-t-2 border-[#1b1c1e] bg-[#d8dbe0] text-xs text-[#17181a]">
      <span className="ml-[43px] w-[91px]">209.065mm</span>
      <span className="w-[87px]">387.556mm</span>
      <span>0mm</span>
      <div className="ml-auto flex w-[181px] items-center">
        <button className="flex w-[77px] items-center gap-4">
          MMGS
          <Caret className="rotate-180" />
        </button>
        <button aria-label="帮助">
          <Icon size={14}>
            <path d="M1 1h16v16H1z" fill="#fff" stroke="#2a6a80" strokeWidth="1.500" />
            <path d="M5.500 6c0-4 7-4 7 0 0 2-3.500 2-3.500 5M9 13v2.500" stroke="#119a2a" strokeWidth="2.500" />
          </Icon>
        </button>
        <button className="ml-12" aria-label="标签">
          <Icon>
            <path d="M2 10l8-8 6 1 1 5-8 8c-2 2-9-4-7-6z" fill="#f8b91e" stroke="#a86a08" />
            <path d="M5 10l5-5M8 12l5-5" stroke="#fff0b0" strokeWidth="1.500" />
            <circle cx="13.500" cy="5.500" r="1.500" fill="#fff" stroke="#a86a08" />
          </Icon>
        </button>
        <svg width="12" height="12" viewBox="0 0 12 12" className="ml-auto mr-1 mt-2">
          <path d="M9 1h2v2H9zM5 5h2v2H5zM9 5h2v2H9zM1 9h2v2H1zM5 9h2v2H5zM9 9h2v2H9z" fill="#f8f9fa" />
        </svg>
      </div>
    </div>
  );
}

/* ---------- red call-outs and pointer over the menu ---------- */

function CallOuts() {
  return (
    <svg
      className="pointer-events-none absolute left-0 top-0 z-30"
      width="560"
      height="300"
      fill="none"
      aria-hidden="true"
    >
      <rect x="255.500" y="132.500" width="237" height="26" stroke="#ff0000" strokeWidth="3" />
      <path d="M434 75L328 45" stroke="#ff0000" strokeWidth="3" />
      <path d="M315 41l19-1-5 12z" fill="#ff0000" />
      <path d="M529 277l-77-80" stroke="#ff0000" strokeWidth="3" />
      <path d="M441 186l18 7-10 9z" fill="#ff0000" />
      <path d="M280 26v14l3-3 3 6 2-1-3-6h5z" fill="#fff" stroke="#222" />
    </svg>
  );
}

export default function App() {
  return (
    <div className="relative h-screen overflow-hidden bg-[#1d6aa5] pb-0.5 font-['Noto_Sans','Noto_Sans_CJK_SC',sans-serif]">
      <div className="flex h-full flex-col rounded-b-md rounded-t-lg bg-[#e9ecf6] px-[7px] pb-0.5 pt-2">
        <MenuBar />
        <Ribbon />
        <div className="flex min-h-0 flex-1 border-t border-black">
          <div className="flex min-w-0 flex-1 flex-col">
            <TabStrip />
            <div className="flex min-h-0 flex-1">
              <LeftToolbar />
              <div className="flex min-w-0 flex-1 flex-col">
                <div className="flex min-h-0 flex-1">
                  <FeaturePanel />
                  <Canvas />
                </div>
                <SheetTabs />
              </div>
            </div>
          </div>
          <RightToolbar />
        </div>
        <LayerToolbar />
        <SelectionToolbar />
        <StatusBar />
      </div>
      <CallOuts />
    </div>
  );
}
